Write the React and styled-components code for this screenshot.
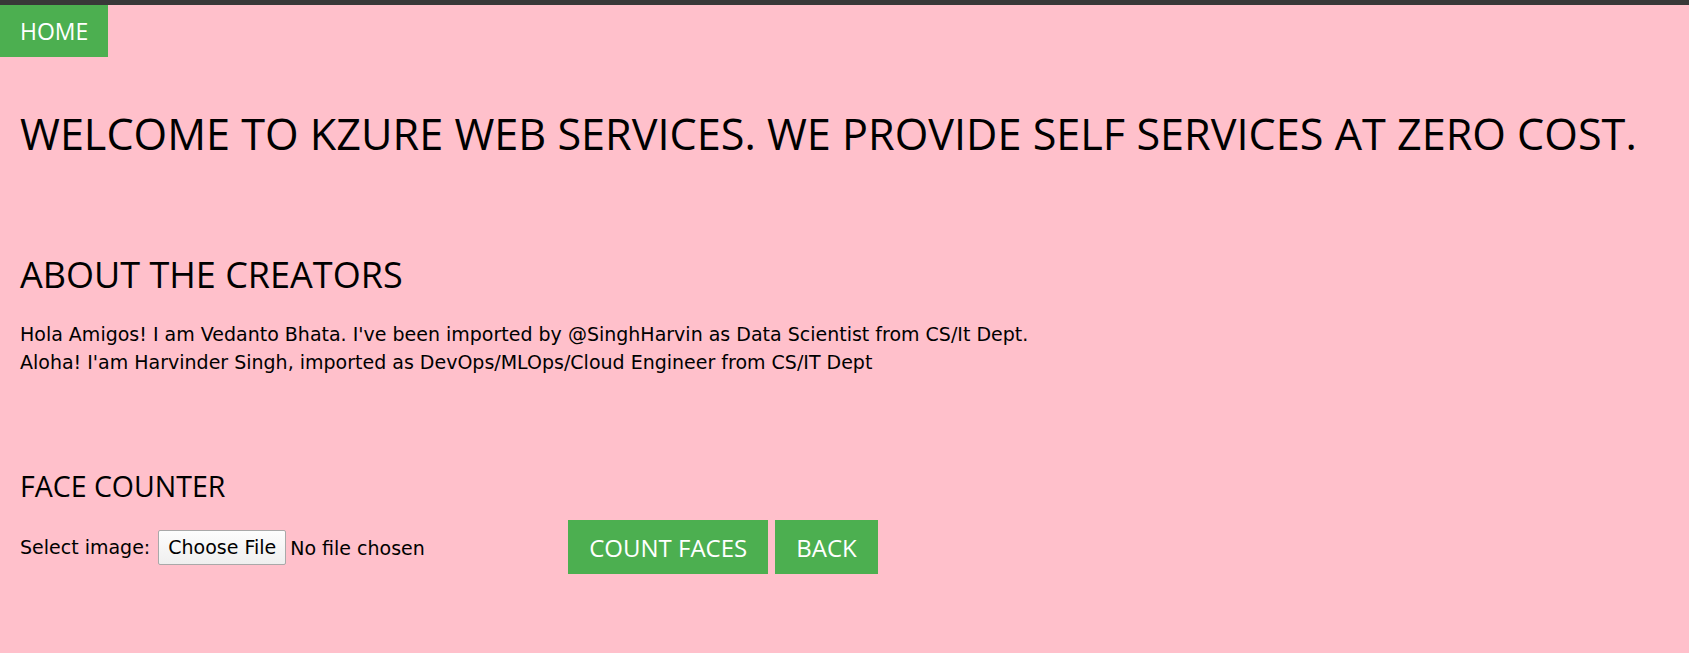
import { styled, createGlobalStyle } from 'styled-components';

const GlobalStyle = createGlobalStyle`
  html, body {
    margin: 0;
    padding: 0;
    background-color: #FFC0CB;
  }
  body {
    font-family: 'DejaVu Sans', Verdana, sans-serif;
    color: #000;
  }
`;

const TopNav = styled.nav`
  width: 100%;
  border-top: 5px solid #383838;
  display: flex;
  flex-direction: row;
`;

const NavLink = styled.a`
  height: 52px;
  padding: 0 20px;
  display: flex;
  align-items: center;
  background-color: #4CAF50;
  color: #fff;
  font-family: 'Open Sans', sans-serif;
  font-size: 23px;
  text-decoration: none;
`;

const Main = styled.main`
  padding: 0 20px;
  display: flex;
  flex-direction: column;
`;

const Title = styled.h1`
  margin: 47px 0 0 0;
  font-family: 'Open Sans', sans-serif;
  font-weight: 400;
  font-size: 43.2px;
  line-height: 60px;
`;

const SectionTitle = styled.h2`
  margin: 88px 0 0 0;
  font-family: 'Open Sans', sans-serif;
  font-weight: 400;
  font-size: 36px;
  line-height: 46px;
`;

const Para = styled.p`
  margin: 22px 0 0 0;
  font-size: 19px;
  line-height: 28px;
`;

const SubTitle = styled.h3`
  margin: 91px 0 0 0;
  font-family: 'Open Sans', sans-serif;
  font-weight: 400;
  font-size: 28.5px;
  line-height: 38px;
`;

const FormRow = styled.form`
  margin-top: 15px;
  display: flex;
  flex-direction: row;
  align-items: center;
`;

const Label = styled.label`
  font-size: 19px;
  margin-right: 8px;
`;

const FileInput = styled.input`
  width: 402px;
  font-family: 'DejaVu Sans', Verdana, sans-serif;
  font-size: 19px;
  color: #000;

  &::file-selector-button {
    height: 35px;
    padding: 0 9px;
    margin-right: 4px;
    font-family: 'DejaVu Sans', Verdana, sans-serif;
    font-size: 19px;
    color: #000;
    background: linear-gradient(#fdfdfd, #efefef);
    border: 1px solid #a9a9a9;
    border-radius: 2px;
  }
`;

const Button = styled.button`
  height: 54px;
  margin-left: ${(p) => p.$gap}px;
  padding: 0 21px;
  border: none;
  background-color: #4CAF50;
  color: #fff;
  font-family: 'Open Sans', sans-serif;
  font-size: 24px;
  cursor: pointer;
`;

function App() {
  return (
    <>
      <GlobalStyle />
      <TopNav>
        <NavLink href="#">HOME</NavLink>
      </TopNav>
      <Main>
        <Title>WELCOME TO KZURE WEB SERVICES. WE PROVIDE SELF SERVICES AT ZERO COST.</Title>
        <section>
          <SectionTitle>ABOUT THE CREATORS</SectionTitle>
          <Para>
            Hola Amigos! I am Vedanto Bhata. I've been imported by @SinghHarvin as Data Scientist from CS/It Dept.
            <br />
            Aloha! I'am Harvinder Singh, imported as DevOps/MLOps/Cloud Engineer from CS/IT Dept
          </Para>
        </section>
        <section>
          <SubTitle>FACE COUNTER</SubTitle>
          <FormRow onSubmit={(e) => e.preventDefault()}>
            <Label htmlFor="image">Select image:</Label>
            <FileInput id="image" type="file" accept="image/*" />
            <Button type="submit" $gap={8}>COUNT FACES</Button>
            <Button type="button" $gap={7}>BACK</Button>
          </FormRow>
        </section>
      </Main>
    </>
  );
}

export default App;
